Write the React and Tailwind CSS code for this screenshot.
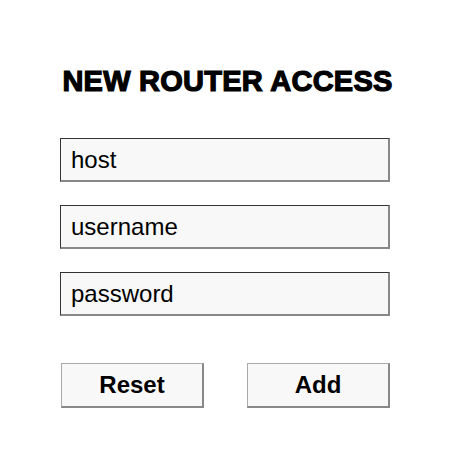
import React from 'react';

const Field = ({ label }) => (
  <div className="h-[44px] w-full flex items-center pl-[10px] bg-[#f8f8f8] border-t border-l border-t-[#333] border-l-[#333] border-r-2 border-b-2 border-r-[#888] border-b-[#888] text-[24px] text-black">
    {label}
  </div>
);

const Btn = ({ label }) => (
  <button className="h-[45px] w-[143px] flex items-center justify-center bg-[#f8f8f8] border border-[#aaa] border-r-2 border-b-2 border-r-[#888] border-b-[#888] text-[24px] font-bold text-black">
    {label}
  </button>
);

export default function App() {
  return (
    <div className="w-[450px] h-[450px] bg-white flex flex-col items-center font-['Liberation_Sans',Arial,sans-serif]">
      <h1 className="mt-[63px] pl-[5px] text-[29px] leading-[36px] font-bold tracking-[0.25px] text-black [-webkit-text-stroke:1.2px_black]">
        NEW ROUTER ACCESS
      </h1>
      <div className="w-[330px] mt-[39px] flex flex-col gap-[23px]">
        <Field label="host" />
        <Field label="username" />
        <Field label="password" />
      </div>
      <div className="w-[330px] mt-[47px] flex justify-between pl-[1px]">
        <Btn label="Reset" />
        <Btn label="Add" />
      </div>
    </div>
  );
}
